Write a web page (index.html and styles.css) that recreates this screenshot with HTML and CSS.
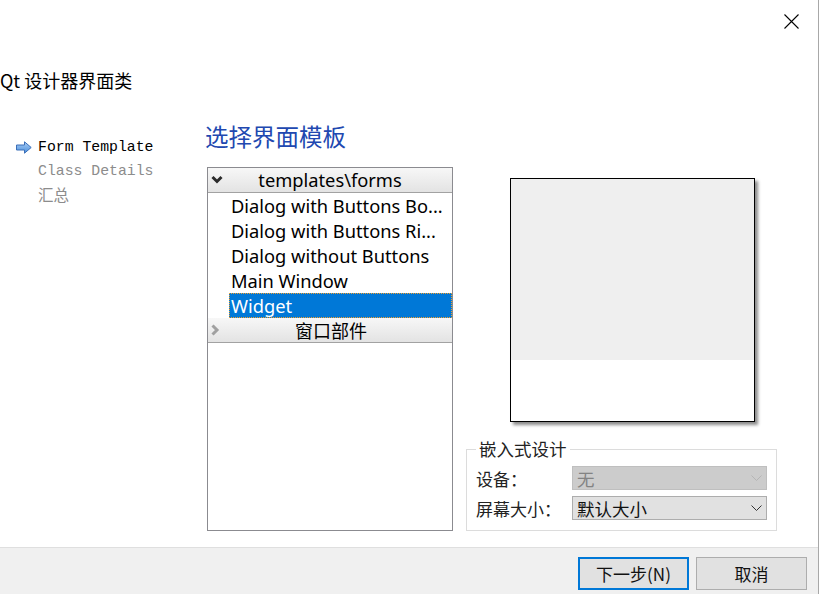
FILE: index.html
```html
<!DOCTYPE html>
<html lang="zh">
<head>
<meta charset="utf-8">
<link rel="stylesheet" href="styles.css">
</head>
<body>
<div class="dialog">
  <div class="top">
    <div class="titlebar">
      <svg class="close" width="15" height="15" viewBox="0 0 15 15"><path d="M0.5 0.5L14.5 14.5M14.5 0.5L0.5 14.5" stroke="#000" stroke-width="1.1" fill="none"/></svg>
    </div>
    <div class="page-title">Qt 设计器界面类</div>
    <div class="content">
      <ul class="steps">
        <li class="step current">
          <svg class="step-arrow" width="16" height="13" viewBox="0 0 16 13">
            <defs><linearGradient id="ag" x1="0" y1="0" x2="0" y2="1"><stop offset="0" stop-color="#a9cdf5"/><stop offset="1" stop-color="#4b8fdc"/></linearGradient></defs>
            <path d="M0.5 4 H8.5 V0.8 L15.2 6.5 L8.5 12.2 V9 H0.5 Z" fill="url(#ag)" stroke="#3b6fb8" stroke-width="1"/>
          </svg>
          <span>Form Template</span>
        </li>
        <li class="step"><span>Class Details</span></li>
        <li class="step"><span class="cjk">汇总</span></li>
      </ul>
      <div class="main">
        <h1 class="heading">选择界面模板</h1>
        <div class="panes">
          <div class="tree">
            <div class="group-head">
              <svg class="chev" width="12" height="9" viewBox="0 0 12 9"><path d="M1.5 1.5L6 6L10.5 1.5" stroke="#2b2b2b" stroke-width="3" fill="none"/></svg>
              <span>templates\forms</span>
            </div>
            <div class="item">Dialog with Buttons Bo...</div>
            <div class="item">Dialog with Buttons Ri...</div>
            <div class="item">Dialog without Buttons</div>
            <div class="item">Main Window</div>
            <div class="item selected">Widget</div>
            <div class="group-head">
              <svg class="chev" width="9" height="12" viewBox="0 0 9 12"><path d="M1.5 1.5L6 6L1.5 10.5" stroke="#a0a0a0" stroke-width="3" fill="none"/></svg>
              <span class="cjk-head">窗口部件</span>
            </div>
          </div>
          <div class="side">
            <div class="preview">
              <div class="preview-top"></div>
            </div>
            <fieldset class="embed">
              <legend>嵌入式设计</legend>
              <div class="row">
                <span class="label">设备：</span>
                <div class="combo disabled"><span>无</span>
                  <svg width="11" height="7" viewBox="0 0 11 7"><path d="M0.5 0.5L5.5 5.5L10.5 0.5" stroke="#b5b5b5" stroke-width="1" fill="none"/></svg>
                </div>
              </div>
              <div class="row">
                <span class="label">屏幕大小：</span>
                <div class="combo"><span>默认大小</span>
                  <svg width="11" height="7" viewBox="0 0 11 7"><path d="M0.5 0.5L5.5 5.5L10.5 0.5" stroke="#333" stroke-width="1" fill="none"/></svg>
                </div>
              </div>
            </fieldset>
          </div>
        </div>
      </div>
    </div>
  </div>
  <div class="footer">
    <button class="btn default">下一步(N)</button>
    <button class="btn">取消</button>
  </div>
</div>
</body>
</html>
```

FILE: styles.css
```css
* { box-sizing: border-box; }
html, body { margin: 0; padding: 0; background: #fff; }
body {
  font-family: "Noto Sans", "Noto Sans CJK SC", sans-serif;
  color: #000;
}
.dialog {
  width: 819px;
  height: 594px;
  border-right: 1px solid #a8a8a8;
  display: flex;
  flex-direction: column;
  background: #fff;
}
.top { flex: 1; display: flex; flex-direction: column; }
.titlebar {
  height: 42px;
  display: flex;
  justify-content: flex-end;
  align-items: flex-start;
  padding: 14px 19px 0 0;
}
.close { display: block; }
.page-title {
  margin-top: 26px;
  font-family: "Noto Sans CJK SC", sans-serif;
  font-size: 18px;
  line-height: 24px;
  height: 24px;
}
.content { display: flex; margin-top: 29px; }
.steps {
  list-style: none;
  margin: 0;
  padding: 15px 0 0 0;
  width: 205px;
  font-family: "Liberation Mono", "Noto Sans CJK SC", monospace;
  font-size: 14.8px;
}
.step {
  height: 23.5px;
  line-height: 23px;
  padding-left: 38px;
  color: #8c8c8c;
  display: flex;
  align-items: center;
}
.step.current { color: #000; padding-left: 16px; }
.step-arrow { display: block; margin-right: 6px; }
.cjk { font-family: "Noto Sans CJK SC", sans-serif; font-size: 15.5px; }
.main { display: flex; flex-direction: column; }
.heading {
  margin: 0;
  font-family: "Noto Sans CJK SC", sans-serif;
  font-weight: normal;
  font-size: 23.5px;
  line-height: 30px;
  color: #2148b0;
}
.panes { display: flex; margin-top: 16px; margin-left: 2px; }
.tree {
  width: 246px;
  height: 364px;
  border: 1px solid #8b8b90;
  font-size: 18.3px;
}
.group-head {
  height: 25px;
  background: linear-gradient(#f7f7f7, #e3e3e3);
  border-bottom: 1px solid #a2a2a2;
  display: flex;
  align-items: center;
  justify-content: center;
  position: relative;
  line-height: 24px;
}
.cjk-head { font-family: "Noto Sans CJK SC", sans-serif; font-size: 18px; padding-left: 2px; }
.group-head .chev { position: absolute; left: 3px; top: 50%; transform: translateY(-50%); }
.item {
  height: 25px;
  line-height: 25px;
  margin-left: 21px;
  padding-left: 2px;
  white-space: nowrap;
}
.item.selected {
  background: #0078d7;
  color: #fff;
  outline: 1px dotted #f0a030;
  outline-offset: -1px;
}
.side { margin-left: 13px; display: flex; flex-direction: column; width: 311px; }
.preview {
  margin-top: 11px;
  margin-left: 44px;
  width: 245px;
  height: 244px;
  border: 1px solid #000;
  background: #fff;
  box-shadow: 3px 3px 3px rgba(0,0,0,0.45);
}
.preview-top { height: 181px; background: #efefef; }
.embed {
  margin: 17px 0 0 0;
  padding: 4px 9px 7px 9px;
  border: 1px solid #dcdcdc;
  font-family: "Noto Sans CJK SC", sans-serif;
  font-size: 17px;
  min-width: 0;
}
.embed legend {
  padding: 0 3px;
  font-size: 17.5px;
  line-height: 20px;
  color: #222;
}
.row { display: flex; align-items: center; height: 30px; }
.label { width: 96px; color: #222; }
.combo {
  width: 195px;
  height: 24px;
  border: 1px solid #adadad;
  background: #e1e1e1;
  display: flex;
  align-items: center;
  justify-content: space-between;
  padding: 0 4px 0 4px;
  color: #111;
  font-size: 17.5px;
}
.combo.disabled { background: #cccccc; border-color: #bfbfbf; color: #838383; }
.footer {
  height: 47px;
  background: #f0f0f0;
  border-top: 1px solid #dfdfdf;
  display: flex;
  justify-content: flex-end;
  align-items: flex-start;
  gap: 7px;
  padding: 9px 11px 0 0;
}
.btn {
  width: 111px;
  height: 33px;
  border: 1px solid #adadad;
  background: #e1e1e1;
  font-family: "Noto Sans CJK SC", sans-serif;
  font-size: 17px;
  color: #111;
  padding: 0;
}
.btn.default { border: 2px solid #0078d7; }
```
